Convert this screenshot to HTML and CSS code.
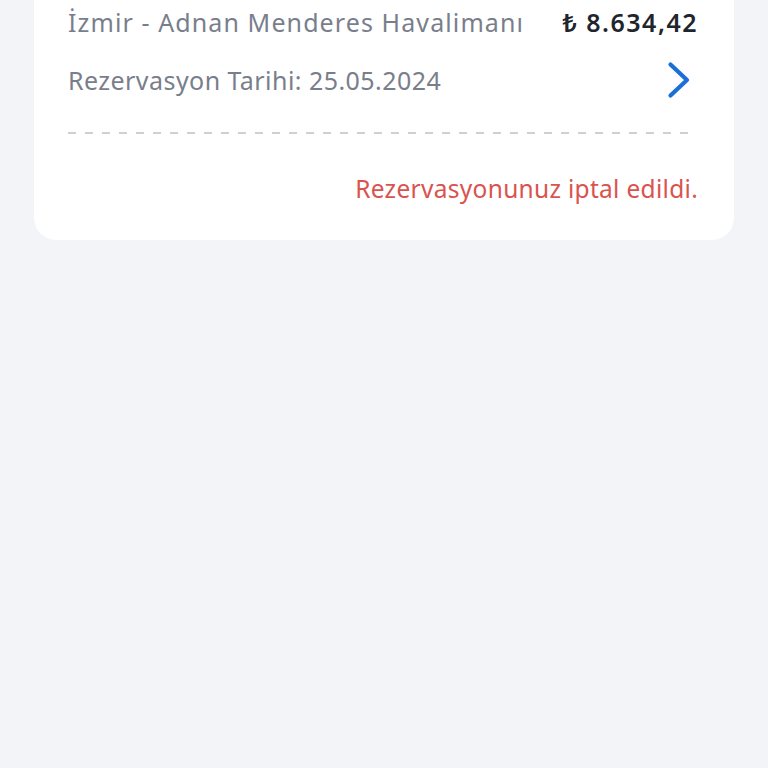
FILE: index.html
```html
<!DOCTYPE html>
<html lang="tr">
<head>
    <meta charset="UTF-8">
    <meta name="viewport" content="width=device-width, initial-scale=1.0">
    <title>Rezervasyonlarım</title>
    <link rel="stylesheet" href="styles.css">
</head>
<body>
    <div class="card">
        <div class="row">
            <span class="place">İzmir - Adnan Menderes Havalimanı</span>
            <span class="price">₺ 8.634,42</span>
        </div>
        <div class="row">
            <span class="date">Rezervasyon Tarihi: 25.05.2024</span>
            <svg class="chevron" width="26" height="38" viewBox="0 0 26 38">
                <path d="M4.5 3.5 L21 19 L4.5 34.5" fill="none" stroke="#1b6fd8" stroke-width="4.2" stroke-linecap="round" stroke-linejoin="round"/>
            </svg>
        </div>
        <div class="dashes"></div>
        <div class="status">Rezervasyonunuz iptal edildi.</div>
    </div>
</body>
</html>
```

FILE: styles.css
```css
*{margin:0;padding:0;box-sizing:border-box}
body{
    background-color: #f3f4f8;
    font-family: "Noto Sans", sans-serif;
    padding: 0 34px;
}
.card{
    background-color: #fff;
    border-radius: 0 0 22px 22px;
    padding: 0 36px 0 34px;
    height: 240px;
}
.row{
    display: flex;
    justify-content: space-between;
    align-items: center;
}
.row:first-child{
    height: 44px;
}
.row:nth-child(2){
    height: 72px;
}
.place, .date{
    color: #797e8c;
    font-size: 25px;
}
.place{
    letter-spacing: 1.1px;
}
.date{
    letter-spacing: 0.45px;
}
.price{
    color: #1f252d;
    font-size: 25px;
    font-weight: 600;
    letter-spacing: 1.5px;
}
.chevron{
    margin-right: 6px;
}
.dashes{
    margin-top: 16px;
    margin-right: 4px;
    height: 2px;
    background-image: linear-gradient(to right, #cfd0d3 50%, transparent 50%);
    background-size: 17px 2px;
}
.status{
    margin-top: 38px;
    text-align: right;
    color: #d9534f;
    font-size: 24.5px;
    letter-spacing: 0.3px;
}
```
